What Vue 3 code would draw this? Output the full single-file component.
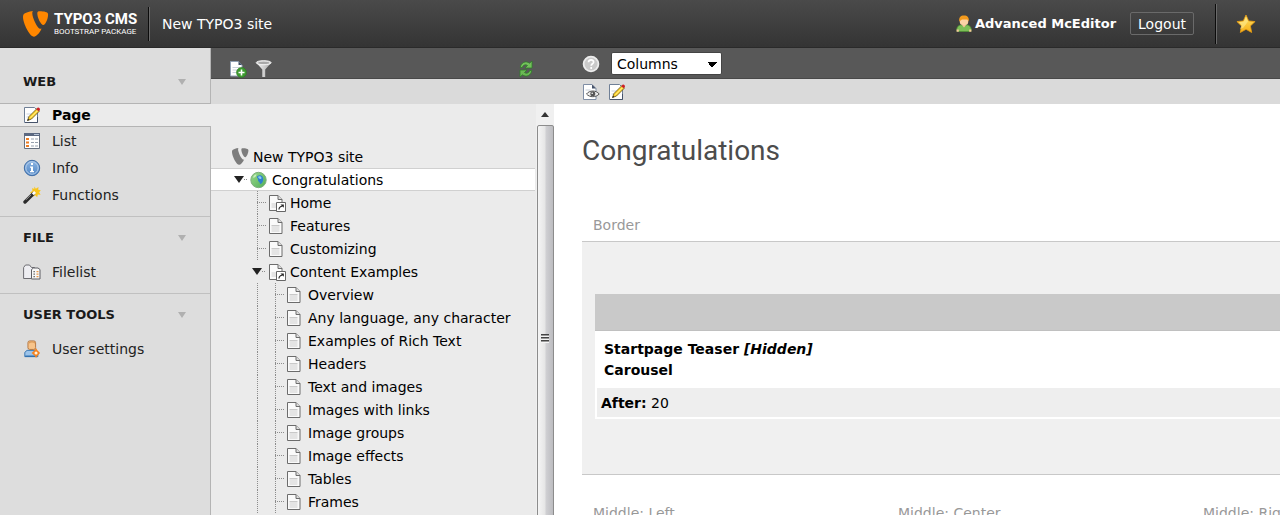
<script setup>
import { ref } from 'vue'

const view = ref('columns')

const modules = [
  {
    name: 'WEB',
    items: [
      { label: 'Page', icon: 'edit', active: true },
      { label: 'List', icon: 'list' },
      { label: 'Info', icon: 'info' },
      { label: 'Functions', icon: 'wand' },
    ],
  },
  { name: 'FILE', items: [{ label: 'Filelist', icon: 'files' }] },
  { name: 'USER TOOLS', items: [{ label: 'User settings', icon: 'settings' }] },
]

const leaf = (label) => ({ label, icon: 'page', cells: ['blank', 'line', 'elbow'] })

const tree = [
  { label: 'New TYPO3 site', icon: 'typo3', cells: [] },
  { label: 'Congratulations', icon: 'globe', cells: ['toggle'], selected: true },
  { label: 'Home', icon: 'shortcut', cells: ['blank', 'elbow'] },
  { label: 'Features', icon: 'page', cells: ['blank', 'elbow'] },
  { label: 'Customizing', icon: 'page', cells: ['blank', 'elbow'] },
  { label: 'Content Examples', icon: 'shortcut', cells: ['blank', 'toggle'] },
  leaf('Overview'),
  leaf('Any language, any character'),
  leaf('Examples of Rich Text'),
  leaf('Headers'),
  leaf('Text and images'),
  leaf('Images with links'),
  leaf('Image groups'),
  leaf('Image effects'),
  leaf('Tables'),
  leaf('Frames'),
]

const middle = ['Middle: Left', 'Middle: Center', 'Middle: Right']
</script>

<template>
  <svg class="sprite" aria-hidden="true">
    <defs>
      <linearGradient id="g-globe" x1="0" y1="0" x2="1" y2="1">
        <stop offset="0" stop-color="#9bd88a" /><stop offset="1" stop-color="#4fae58" />
      </linearGradient>
      <linearGradient id="g-star" x1="0" y1="0" x2="0" y2="1">
        <stop offset="0" stop-color="#ffe36a" /><stop offset="1" stop-color="#f7b017" />
      </linearGradient>
      <linearGradient id="g-funnel" x1="0" y1="0" x2="1" y2="0">
        <stop offset="0" stop-color="#f4f4f4" /><stop offset="1" stop-color="#a9a9a9" />
      </linearGradient>
      <linearGradient id="g-info" x1="0" y1="0" x2="0" y2="1">
        <stop offset="0" stop-color="#8fb6e2" /><stop offset="1" stop-color="#4f86c6" />
      </linearGradient>
    </defs>
    <symbol id="i-typo3" viewBox="0 0 26 26">
      <path d="M18.6 17.6c-.4.1-.7.2-1.100.2-3.300 0-8.200-11.600-8.200-15.400 0-1.400.3-1.900.8-2.300C6 .6 1 2.100.300 4c-.2.500-.300 1.200-.300 2C0 12 6.500 25.700 11 25.700c2.100 0 5.700-3.400 7.600-8.100M16.700.3c4.200 0 8.400.7 8.400 3.100 0 4.800-3 10.600-4.600 10.600-2.800 0-6.200-7.700-6.200-11.500 0-1.800.7-2.200 2.400-2.200" />
    </symbol>
    <symbol id="i-edit" viewBox="0 0 18 18">
      <path d="M1.500 1.500h10l3 3v12h-13z" fill="#fff" stroke="#6f7f96" />
      <path d="M3.500 8h5M3.500 11h4" stroke="#cbd3de" />
      <path d="M2 16.500h12.500V11" fill="none" stroke="#46536a" />
      <path d="M4.500 14.500 6 10.500l8-8 2.500 2.500-8 8z" fill="#ffd42a" stroke="#5b4a18" stroke-width=".8" />
      <path d="m7.500 11.800 7.700-7.700" stroke="#fff19a" />
      <path d="m13.300 3.200 1.500-1.600c1-.5 2.600 1 2.100 2.100l-1.500 1.600z" fill="#cf1f26" />
      <path d="m4.300 14.800.8-2 1.200 1.200z" fill="#222" />
    </symbol>
    <symbol id="i-list" viewBox="0 0 18 18">
      <path d="M1.500 1.500h15v15h-15z" fill="#fff" stroke="#66707f" />
      <path d="M1 1h16v3H1z" fill="#5b6880" />
      <path d="M11 2h5v1h-5z" fill="#b9c6d8" />
      <path d="M3 6h3v2H3zM3 9.500h3v2H3zM3 13h3v2H3z" fill="#ee7d22" />
      <path d="M8 7h7M8 10.500h7M8 14h7" stroke="#97a1ae" stroke-dasharray="3 1" />
    </symbol>
    <symbol id="i-info" viewBox="0 0 18 18">
      <circle cx="9" cy="9" r="7.700" fill="url(#g-info)" stroke="#3f6da6" />
      <circle cx="9" cy="9" r="6.200" fill="none" stroke="#b8d0ec" />
      <path d="M8 4h2v2H8zM7 7.500h3V12h1v1.300H7V12h1V8.800H7z" fill="#fff" />
    </symbol>
    <symbol id="i-wand" viewBox="0 0 18 18">
      <path d="m11.500.5 1.300 2.200L15.500 1l-.3 2.700 2.600.6-1.700 2 1.500 2.400-2.800-.1-.6 2.600-2-1.900L9.500 11l.1-3L7 6.600l2.400-1.500-.2-3 2 1z" fill="#f9c51c" />
      <path d="m2 16 8.500-8.500" stroke="#2b2b2b" stroke-width="3.400" stroke-linecap="round" />
      <path d="m3 13.800 5-5" stroke="#9a9a9a" />
      <path d="m9.800 8.200 2.300-2.300" stroke="#fff" stroke-width="2.800" />
    </symbol>
    <symbol id="i-files" viewBox="0 0 18 18">
      <path d="M.6 15.500V4.500L2.500 2h4l2 2.500h3v11z" fill="#eeeef2" stroke="#6d6d72" />
      <path d="M8.500 15.500v-9l2-1.500h4.500l2 1.500v9.500h-8.500z" fill="#f8f8f8" stroke="#5f5f64" />
      <path d="M10.500 8h1.300v1.300h-1.300zM10.500 10.500h1.300v1.300h-1.300zM10.500 13h1.300v1.300h-1.300z" fill="#555" />
      <path d="M13.500 8h2v1.300h-2zM13.500 10.500h2v1.300h-2zM13.500 13h2v1.300h-2z" fill="#eb9a4c" />
    </symbol>
    <symbol id="i-settings" viewBox="0 0 18 20">
      <path d="M1 18.500v-4.800l2.500-2.200h10l2 2.500v4.500z" fill="#9dc4ea" stroke="#2f6fae" />
      <path d="M1.500 18h13" stroke="#2f6fae" stroke-width="1.500" />
      <rect x="4.500" y="1" width="8.500" height="9.500" rx="2" fill="#f8c48a" stroke="#b0713a" />
      <path d="M5.500 3.500c1-2 6-2 7 0" stroke="#d99a5a" stroke-width="1.500" fill="none" />
      <path d="m13.500 9 1.500 2.500 3 3-3 3-1.500 2.500-1.500-2.500-3.500-3 3.500-3z" fill="#f5821f" />
      <circle cx="13.500" cy="14.500" r="1.700" fill="#fff2dd" />
    </symbol>
    <symbol id="i-page" viewBox="0 0 18 18">
      <path d="M1.500 1.500h8.500l4 4v11H1.500z" fill="#fafafa" stroke="#6c6c6c" />
      <path d="M10 1.500v4h4" fill="#ddd" stroke="#6c6c6c" />
      <path d="M3.500 9h8v6h-8z" fill="#e4e4e4" />
      <path d="M3.500 8.500h8" stroke="#c9c9c9" />
    </symbol>
    <symbol id="i-shortcut" viewBox="0 0 18 18">
      <path d="M1.500 1.500h8.500l4 4v11H1.500z" fill="#fafafa" stroke="#6c6c6c" />
      <path d="M10 1.500v4h4" fill="#ddd" stroke="#6c6c6c" />
      <path d="M3.500 9h5v5h-5z" fill="#e4e4e4" />
      <path d="M8.500 8.500h9v9h-9z" fill="#fff" stroke="#666" />
      <path d="M11 15.500c0-2 1-3 3.500-3.500" stroke="#222" stroke-width="1.200" fill="none" />
      <path d="M12.500 10.500h3.300v3.300z" fill="#222" />
    </symbol>
    <symbol id="i-globe" viewBox="0 0 18 18">
      <circle cx="8.500" cy="9" r="7.700" fill="url(#g-globe)" stroke="#7fae7d" />
      <path d="M7.500 5c2-1.300 4.500-.6 5.200 1 1.200 2.500.3 6-2 7-1 .3-.8-1.800-2-2.400-1.200-.7-.2-2.400-1-3.200S6.500 6 7.500 5" fill="#2e80cf" />
      <path d="M8.500 5.500c1.500-.5 3 .2 3 1.500S9.500 8 9 7.500s-1.300-1.600-.5-2" fill="#8ccbf0" />
      <path d="M3 6.500c1-2.300 2-3 3.500-3.300-.3 2-1.800 4-3.500 3.300" fill="#c9f0bd" />
    </symbol>
    <symbol id="i-newpage" viewBox="0 0 18 18">
      <path d="M1.500 1.500h8l3.500 3.500v11H1.500z" fill="#fff" stroke="#90a0b4" />
      <path d="M9.500 1.500V5H13z" fill="#3f4d63" />
      <path d="M3.500 7.500h7M3.500 10h5M3.500 12.500h4" stroke="#c8d0da" />
      <circle cx="12.500" cy="12.500" r="5" fill="#3d9a30" stroke="#2b7a22" stroke-width=".6" />
      <path d="M12.500 9.500v6M9.500 12.500h6" stroke="#fff" stroke-width="1.600" />
    </symbol>
    <symbol id="i-funnel" viewBox="0 0 18 18">
      <path d="M1.500 3 7.300 9.500V17h2.900V9.500L16 3z" fill="url(#g-funnel)" />
      <ellipse cx="8.700" cy="2.700" rx="7.500" ry="2.100" fill="#dcdcdc" stroke="#f5f5f5" stroke-width=".8" />
      <ellipse cx="8.700" cy="2.900" rx="5.500" ry="1.100" fill="#a8a8a8" />
    </symbol>
    <symbol id="i-refresh" viewBox="0 0 18 18">
      <path d="M3.300 7.500C3.800 2.500 9 .3 12.500 3.200L15 1v7H8l2.500-2.500C8.500 4 6 5 5.300 7.500z" fill="#74bf5c" stroke="#2f7d28" stroke-width=".8" />
      <path d="M14.700 10.500c-.5 5-5.700 7.200-9.200 4.300L3 17v-7h7l-2.500 2.500c2 1.500 4.500.5 5.200-2z" fill="#6ab853" stroke="#2f7d28" stroke-width=".8" />
    </symbol>
    <symbol id="i-help" viewBox="0 0 18 18">
      <circle cx="9" cy="9" r="7.400" fill="#cacaca" stroke="#ececec" stroke-width="1.800" />
      <path d="M6.500 7.300C6.500 4 11.800 4.200 11.600 7.200c-.1 1.600-2.400 1.600-2.400 3.500M9.200 12v2" fill="none" stroke="#fff" stroke-width="1.700" />
    </symbol>
    <symbol id="i-view" viewBox="0 0 18 18">
      <path d="M1.500 1.500h8.500l4 4v11H1.500z" fill="#fff" stroke="#7f8ea5" />
      <path d="M10 1.500v4h4z" fill="#46536a" />
      <path d="M3.500 7h5" stroke="#c8d0da" />
      <path d="M4.500 11c3-4 9.500-4 12.700 0-3.200 3.600-9.700 3.600-12.700 0z" fill="#eee" stroke="#555" />
      <circle cx="10.800" cy="10.800" r="2.500" fill="#555" />
      <circle cx="10.200" cy="10.200" r=".8" fill="#fff" />
    </symbol>
    <symbol id="i-user" viewBox="0 0 16 18">
      <path d="M1 16.500c-1-3.500 1-6 3.500-6.500h7c2.500.5 4.500 3 3.500 6.500z" fill="#7cbf57" stroke="#4e8f34" stroke-width=".7" />
      <path d="M.6 14.500h2.200v2.200H.6zM13.200 14.500h2.200v2.200h-2.200z" fill="#f6c79a" />
      <path d="M5.500 9.500h5L8 12.500z" fill="#f6c79a" />
      <rect x="3.800" y="1.500" width="8.400" height="8.600" rx="3" fill="#fad3a5" />
      <path d="M3.300 6.500C2.800 2.500 4.500.6 8 .6s5.200 1.900 4.700 5.900L11.300 4.600H6z" fill="#f39a1d" />
    </symbol>
    <symbol id="i-star" viewBox="0 0 20 20">
      <path d="m10 1 2.700 5.900 6.400.7-4.700 4.400 1.300 6.500L10 15.300l-5.700 3.200L5.600 12 .900 7.600l6.400-.7z" fill="url(#g-star)" stroke="#e79a10" stroke-width=".8" />
      <path d="m10 3 2 4.500-4.500 6-3.500 2 1.500-4L3 8.300l5-.8z" fill="#ffec93" opacity=".6" />
    </symbol>
  </svg>

  <div class="backend">
    <header class="topbar">
      <a class="brand" href="#">
        <svg class="brand-mark"><use href="#i-typo3" /></svg>
        <span class="brand-text">
          <span class="brand-name">TYPO3 CMS</span>
          <span class="brand-sub">BOOTSTRAP PACKAGE</span>
        </span>
      </a>
      <span class="rule short"></span>
      <span class="site">New TYPO3 site</span>
      <svg class="user-icon"><use href="#i-user" /></svg>
      <span class="user">Advanced McEditor</span>
      <button class="logout" type="button">Logout</button>
      <span class="rule"></span>
      <button class="bookmark" type="button" aria-label="Bookmarks">
        <svg><use href="#i-star" /></svg>
      </button>
    </header>

    <div class="body">
      <nav class="modules">
        <section v-for="group in modules" :key="group.name" class="group">
          <h2>{{ group.name }}<span class="caret"></span></h2>
          <a v-for="item in group.items" :key="item.label" href="#" class="module" :class="{ active: item.active }">
            <svg><use :href="`#i-${item.icon}`" /></svg>{{ item.label }}
          </a>
        </section>
      </nav>

      <section class="nav-pane">
        <div class="bar dark">
          <button type="button" aria-label="New page"><svg class="ic"><use href="#i-newpage" /></svg></button>
          <button type="button" aria-label="Filter"><svg class="ic"><use href="#i-funnel" /></svg></button>
          <button class="refresh" type="button" aria-label="Refresh"><svg class="ic"><use href="#i-refresh" /></svg></button>
        </div>
        <div class="bar light"></div>
        <div class="tree-wrap">
          <ul class="tree">
            <li v-for="node in tree" :key="node.label" :class="{ selected: node.selected }">
              <span v-for="(cell, i) in node.cells" :key="i" class="cell" :class="cell">
                <span v-if="cell === 'toggle'" class="arrow"></span>
                <span v-if="cell === 'elbow' || cell === 'toggle'" class="dash"></span>
              </span>
              <a href="#"><svg :class="{ root: node.icon === 'typo3' }"><use :href="`#i-${node.icon}`" /></svg>{{ node.label }}</a>
            </li>
          </ul>
          <div class="scrollbar">
            <span class="up"></span>
            <div class="thumb"><span class="grip"></span></div>
          </div>
        </div>
      </section>

      <main class="content">
        <div class="bar dark">
          <button type="button" aria-label="Help"><svg class="ic"><use href="#i-help" /></svg></button>
          <select v-model="view" aria-label="View">
            <option value="columns">Columns</option>
            <option value="languages">Languages</option>
          </select>
        </div>
        <div class="bar light">
          <button type="button" aria-label="View page"><svg class="ic"><use href="#i-view" /></svg></button>
          <button type="button" aria-label="Edit page"><svg class="ic"><use href="#i-edit" /></svg></button>
        </div>
        <div class="doc-body">
          <h1>Congratulations</h1>
          <h3>Border</h3>
          <div class="column">
            <article class="element">
              <div class="handle"></div>
              <p class="text">Startpage Teaser <em>[Hidden]</em><br />Carousel</p>
              <p class="after"><b>After:</b> 20</p>
            </article>
          </div>
          <div class="middle">
            <h3 v-for="name in middle" :key="name">{{ name }}</h3>
          </div>
        </div>
      </main>
    </div>
  </div>
</template>

<style>
body {
  overflow: hidden;
}
</style>

<style scoped>
.sprite {
  position: absolute;
  width: 0;
  height: 0;
}
.backend {
  display: flex;
  flex-direction: column;
  height: 100vh;
  overflow: hidden;
  font-family: Verdana, "DejaVu Sans", sans-serif;
  font-size: 14px;
  color: #000;
}
button {
  padding: 0;
  border: 0;
  background: none;
  font: inherit;
  color: inherit;
  display: flex;
}
a {
  color: inherit;
  text-decoration: none;
}
h1,
h2,
h3,
p,
ul {
  margin: 0;
  padding: 0;
}

.topbar {
  flex: none;
  box-sizing: border-box;
  height: 48px;
  display: flex;
  align-items: center;
  padding: 0 24px 0 23px;
  background: linear-gradient(#4a4a4a, #343434);
  border-bottom: 1px solid #2a2a2a;
  color: #fff;
}
.brand {
  display: flex;
  align-items: center;
  gap: 5px;
}
.brand-mark {
  width: 26px;
  height: 26px;
  fill: #ff8700;
}
.brand-text {
  display: flex;
  flex-direction: column;
  width: 84px;
  font-family: Roboto, sans-serif;
  white-space: nowrap;
}
.brand-name {
  font-size: 15px;
  line-height: 16px;
  font-weight: bold;
}
.brand-sub {
  font-size: 8px;
  line-height: 10px;
}
.rule {
  width: 1px;
  height: 40px;
  background: #0c0c0c;
  border-right: 1px solid #6a6a6a;
}
.rule.short {
  height: 34px;
  margin: 0 12px 0 10px;
}
.user-icon {
  width: 16px;
  height: 18px;
  margin: 0 3px 0 auto;
}
.user {
  font-size: 13px;
  font-weight: bold;
}
.logout {
  box-sizing: border-box;
  height: 23px;
  padding: 0 7px;
  margin: 0 21px 0 14px;
  align-items: center;
  border: 1px solid #6a6a6a;
  border-radius: 2px;
}
.bookmark {
  margin-left: 19px;
}
.bookmark svg {
  width: 20px;
  height: 20px;
}

.body {
  flex: 1;
  min-height: 0;
  display: flex;
}
.modules {
  flex: none;
  width: 211px;
  display: flex;
  flex-direction: column;
  background: linear-gradient(to left, #b4b4b4 1px, #ddd 1px);
}
.group {
  padding-bottom: 8px;
  border-bottom: 1px solid #c0c0c0;
  margin-right: 1px;
}
.group:first-child {
  padding-top: 13px;
}
.group:last-child {
  border-bottom: 0;
}
.group h2 {
  display: flex;
  align-items: center;
  justify-content: space-between;
  height: 41px;
  padding: 0 24px 0 23px;
  font-size: 13px;
  color: #1a1a1a;
}
.group:first-child h2 {
  margin-bottom: 1px;
}
.caret {
  border: 4px solid transparent;
  border-top: 6px solid #b0b0b0;
  border-bottom: 0;
}
.module {
  display: flex;
  align-items: center;
  gap: 11px;
  height: 27px;
  padding-left: 23px;
  color: #222;
}
.module svg {
  width: 18px;
  height: 18px;
}
.module.active {
  box-sizing: border-box;
  height: 24px;
  margin-right: -1px;
  background: #ebebeb;
  border: solid #b4b4b4;
  border-width: 1px 0;
  font-weight: bold;
  color: #000;
}

.bar {
  flex: none;
  box-sizing: border-box;
  display: flex;
  align-items: center;
}
.bar.dark {
  height: 31px;
  background: #585858;
  border-bottom: 1px solid #484848;
}
.bar.light {
  height: 25px;
  background: #dadada;
}
.ic {
  width: 18px;
  height: 18px;
}

.nav-pane {
  flex: none;
  width: 343px;
  display: flex;
  flex-direction: column;
}
.nav-pane .bar.dark {
  align-items: flex-end;
  gap: 8px;
  padding: 0 19px 0 18px;
}
.nav-pane .refresh {
  margin-left: auto;
}
.tree-wrap {
  flex: 1;
  min-height: 0;
  display: flex;
  overflow: hidden;
  background: #ebebeb;
}
.tree {
  flex: 1;
  min-width: 0;
  list-style: none;
  padding-top: 41px;
}
.tree li {
  box-sizing: border-box;
  height: 23px;
  display: flex;
  align-items: center;
  padding-left: 19px;
  border: solid transparent;
  border-width: 1px 0;
  white-space: nowrap;
}
.tree li.selected {
  background: #fff;
  border-color: #d0d0d0;
}
.tree a {
  display: flex;
  align-items: center;
  gap: 4px;
  padding-left: 2px;
}
.tree a svg {
  width: 18px;
  height: 18px;
}
.tree a svg.root {
  width: 17px;
  height: 17px;
  fill: #7d7d7d;
}
.cell {
  width: 18px;
  height: 23px;
  display: flex;
  align-items: center;
}
.cell.line,
.cell.elbow {
  background: linear-gradient(#8c8c8c 50%, transparent 50%) 9px 0 / 1px 2px repeat-y;
}
.dash {
  width: 9px;
  height: 1px;
  margin-left: auto;
  background: repeating-linear-gradient(to right, #8c8c8c 0 1px, transparent 1px 2px);
}
.arrow {
  margin-left: 4px;
  border: 5px solid transparent;
  border-top: 7px solid #222;
  border-bottom: 0;
}
.toggle .dash {
  width: 4px;
}
.scrollbar {
  flex: none;
  width: 18px;
  margin-left: 1px;
  display: flex;
  flex-direction: column;
  align-items: center;
  background: #f0f0f0;
}
.up {
  flex: none;
  margin: 8px 0;
  border: 4px solid transparent;
  border-bottom: 5px solid #333;
  border-top: 0;
}
.thumb {
  flex: none;
  box-sizing: border-box;
  width: 17px;
  height: 426px;
  display: flex;
  align-items: center;
  justify-content: center;
  border: 1px solid #8c8c8c;
  border-radius: 2px;
  background: linear-gradient(to right, #f5f5f5, #e6e6e6 45%, #cfcfd2 55%, #bcbcc0);
}
.grip {
  width: 8px;
  height: 9px;
  background: repeating-linear-gradient(#444 0 1px, #999 1px 2px, #f4f4f4 2px 3px);
}

.content {
  flex: 1;
  min-width: 0;
  display: flex;
  flex-direction: column;
  background: #fff;
}
.content .bar {
  padding-left: 28px;
  gap: 11px;
}
.content .bar.dark {
  padding-top: 1px;
}
.content .bar.light {
  gap: 8px;
}
select {
  width: 111px;
  height: 23px;
  padding: 0 5px;
  border: 1px solid #444;
  border-radius: 2px;
  appearance: none;
  font: inherit;
  color: #000;
  background:
    conic-gradient(from 315deg at 50% 100%, #000 90deg, transparent 0) calc(100% - 4px) 9px / 10px 5px no-repeat,
    #fff;
  background:
    conic-gradient(from 315deg at 50% 100%, transparent 0 0, #000 0 90deg, transparent 0) calc(100% - 4px) 9px / 10px 5px no-repeat,
    #fff;
}
.doc-body {
  flex: 1;
  min-height: 0;
  overflow: hidden;
  padding: 27px 0 0 28px;
}
h1 {
  font-family: Roboto, sans-serif;
  font-size: 28px;
  line-height: 40px;
  font-weight: normal;
  color: #4c4c4c;
}
h3 {
  padding-left: 11px;
  font-size: 14px;
  line-height: 20px;
  font-weight: normal;
  color: #999;
  white-space: nowrap;
}
h1 + h3 {
  margin: 44px 0 6px;
}
.column {
  padding: 52px 0 55px 13px;
  background: #f0f0f0;
  border: solid #c8c8c8;
  border-width: 1px 0;
}
.handle {
  height: 36px;
  background: #c9c9c9;
  border-bottom: 1px solid #c0c0c0;
}
.text {
  padding: 8px 9px 7px;
  background: #fff;
  font-weight: bold;
  line-height: 21px;
}
.after {
  padding: 5px 4px 3px;
  background: #eee;
  border: solid #fff;
  border-width: 0 0 2px 2px;
  line-height: 21px;
}
.middle {
  display: grid;
  grid-template-columns: repeat(3, 305px);
  padding-top: 28px;
}
</style>
